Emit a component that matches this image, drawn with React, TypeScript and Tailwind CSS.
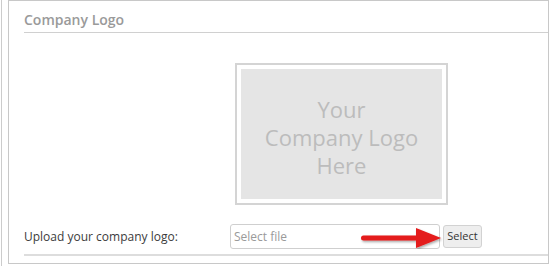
export default function App() {
  return (
    <div className="w-[550px] h-[266px] bg-white flex font-['Open_Sans',sans-serif] overflow-hidden">
      <div className="ml-px w-px h-full bg-[#cccccc]" />
      <div className="ml-[6px] w-[541px] h-[264px] border border-[#c8c8c8] flex flex-col pl-[15px]">
        {/* Header */}
        <div className="h-[32px] flex items-center border-b border-[#d0d0d0]">
          <h2 className="text-[14px] font-semibold text-[#9a9a9a] leading-none mt-[6px]">Company Logo</h2>
        </div>

        {/* Logo preview */}
        <div className="flex mt-[30px]">
          <div className="w-[206px]" />
          <div className="ml-[5px] w-[213px] h-[142px] border-2 border-[#d4d4d4] p-[4px]">
            <div className="w-full h-full bg-[#e5e5e5] flex flex-col items-center justify-center text-[22px] leading-[28px] text-[#bcbcbc] pt-[5px]">
              <span>Your</span>
              <span>Company Logo</span>
              <span>Here</span>
            </div>
          </div>
        </div>

        {/* Upload row */}
        <div className="flex items-center mt-[19px] h-[25px]">
          <label className="w-[206px] text-[12px] text-[#3c3c3c]">Upload your company logo:</label>
          <div className="relative w-[210px] h-[25px] border border-[#cfcfcf] rounded-[3px] flex items-center px-[3px] text-[12px] text-[#9a9a9a]">
            Select file
            <svg
              className="absolute left-[128px] top-[2px]"
              width="84"
              height="22"
              viewBox="0 0 84 22"
            >
              <defs>
                <filter id="sh" x="-10%" y="-30%" width="120%" height="160%">
                  <feDropShadow dx="1" dy="1.5" stdDeviation="1" floodColor="#000" floodOpacity="0.35" />
                </filter>
              </defs>
              <g filter="url(#sh)">
                <rect x="2" y="8.5" width="60" height="5" rx="2.5" fill="#e41a1a" />
                <polygon points="57,1 82,11 57,21" fill="#e41a1a" />
              </g>
            </svg>
          </div>
          <button
            type="button"
            className="ml-[3px] w-[39px] h-[23px] rounded-[3px] border border-[#d2d2d2] bg-[#eeeeee] text-[11px] text-[#333333] flex items-center justify-center"
          >
            Select
          </button>
        </div>

        <div className="mt-[5px] h-[2px] bg-[#dddddd]" />
      </div>
    </div>
  );
}
